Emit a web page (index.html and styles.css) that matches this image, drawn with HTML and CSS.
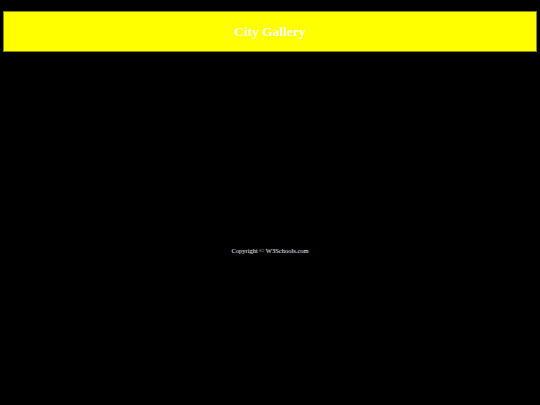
FILE: index.html
```html
<!DOCTYPE html>
<html>
<head>
<meta charset="utf-8">
<link rel="stylesheet" href="styles.css">
</head>
<body>
<header class="header"><h1 class="title">City Gallery</h1></header>
<main class="content"></main>
<footer class="footer">Copyright © W3Schools.com</footer>
</body>
</html>
```
FILE: styles.css
```css
html, body { margin: 0; padding: 0; background: #000; }
body { font-family: "Liberation Serif", serif; color: #fff; padding: 11px 3px 0; }
.header {
  background: #ffff00;
  height: 41px;
  box-sizing: border-box;
  border: 1px solid #8a8a00;
  display: flex;
  align-items: center;
  justify-content: center;
}
.title { margin: 0; font-size: 13.5px; font-weight: bold; color: #fffef0; line-height: 1; }
.content { height: 194px; }
.footer { text-align: center; font-size: 6.5px; line-height: 10px; color: #f2f2f2; }
```
